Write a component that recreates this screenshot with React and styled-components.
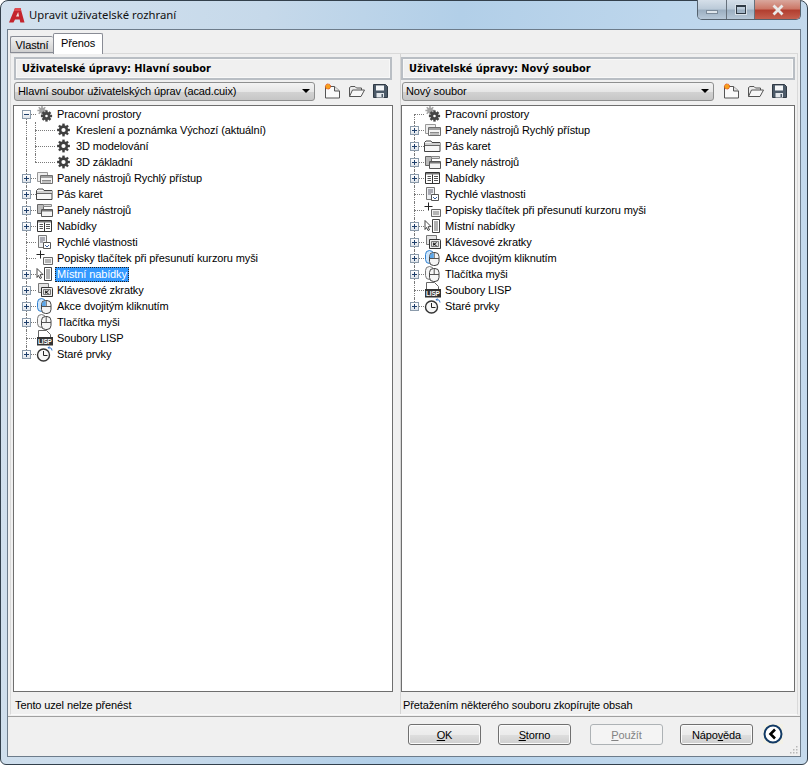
import React from "react";
import styled, { createGlobalStyle } from "styled-components";

const GlobalStyle = createGlobalStyle`
  html, body { margin: 0; padding: 0; background: #fff; }
  #root { width: 808px; height: 765px; }
`;

const Frame = styled.div`
  box-sizing: border-box;
  width: 808px;
  height: 765px;
  display: flex;
  flex-direction: column;
  padding: 0 7px 7px;
  border: 1px solid #33404c;
  border-radius: 8px 8px 6px 6px;
  background: linear-gradient(96deg, #d3e1ee 0%, #c6d9ea 30%, #b2cfe8 52%, #bdd6ec 75%, #c6daec 100%);
  font-family: "Liberation Sans", Arial, sans-serif;
  font-size: 11px;
  letter-spacing: -0.12px;
  color: #000;
`;

const TitleBar = styled.div`
  height: 28px;
  margin: 0 -1px;
  display: flex;
  align-items: flex-start;
  flex-shrink: 0;
`;

const AppLogo = styled.svg`
  width: 16px;
  height: 16px;
  margin: 6px 4px 0 2px;
`;

const Title = styled.div`
  flex: 1;
  padding-top: 6px;
  font-family: "Noto Sans", sans-serif;
  font-size: 11.3px;
  letter-spacing: 0;
  line-height: 16px;
  color: #111;
`;

const WinButtons = styled.div`
  display: flex;
  height: 19px;
  margin-top: -1px;
  border: 1px solid #55626e;
  border-top: none;
  border-radius: 0 0 5px 5px;
  overflow: hidden;
`;

const WinButton = styled.div`
  display: flex;
  align-items: center;
  justify-content: center;
  width: ${({ $w }) => $w}px;
  border-right: 1px solid #66717c;
  background: ${({ $close }) =>
    $close
      ? "linear-gradient(#d9a79d 0%, #cc7868 45%, #b23f30 55%, #c4604f 100%)"
      : "linear-gradient(#d5dfe9 0%, #bccbd9 45%, #9cafc1 55%, #b7c8d8 100%)"};
  &:last-child { border-right: none; }
`;

const MinGlyph = styled.div`
  width: 10px;
  height: 2px;
  margin-top: 5px;
  border: 1px solid #7b8a99;
  background: #dfe6ec;
`;

const MaxGlyph = styled.div`
  width: 8px;
  height: 6px;
  border: 1px solid #2f3a45;
  border-top-width: 2px;
  outline: 1px solid #d8e0e8;
`;

const CloseGlyph = styled.svg`
  width: 14px;
  height: 12px;
`;

const Client = styled.div`
  flex: 1;
  display: flex;
  flex-direction: column;
  min-height: 0;
  margin: 0 -1px;
  border: 1px solid #6d7c8b;
  background: #f0f0f0;
`;

const TabStrip = styled.div`
  height: 20px;
  margin-top: 3px;
  padding-left: 2px;
  display: flex;
  align-items: flex-end;
  flex-shrink: 0;
  position: relative;
  z-index: 1;
`;

const Tab = styled.div`
  box-sizing: border-box;
  display: flex;
  justify-content: center;
  width: ${({ $w }) => $w}px;
  height: ${({ $active }) => ($active ? 21 : 17)}px;
  margin-bottom: ${({ $active }) => ($active ? -1 : 0)}px;
  padding-top: ${({ $active }) => ($active ? 2 : 1)}px;
  line-height: 15px;
  border: 1px solid #898c95;
  border-right: ${({ $active }) => ($active ? "1px solid #898c95" : "none")};
  border-bottom: ${({ $active }) => ($active ? "none" : "1px solid #898c95")};
  border-radius: 2px 2px 0 0;
  background: ${({ $active }) => ($active ? "#fff" : "linear-gradient(#f2f2f2, #cfcfcf)")};
`;

const TabPanel = styled.div`
  height: 660px;
  margin: 0 2px;
  display: flex;
  flex-shrink: 0;
  border: 1px solid #d9d9d9;
  border-bottom: 1px solid #fafafa;
`;

const Pane = styled.div`
  box-sizing: border-box;
  width: ${({ $w }) => $w}px;
  padding: 3px ${({ $r }) => $r}px 0 ${({ $l }) => $l}px;
  display: flex;
  flex-direction: column;
  flex-shrink: 0;
`;

const Splitter = styled.div`
  width: 1px;
  background: #d4d4d4;
  flex-shrink: 0;
`;

const PaneHeader = styled.div`
  box-sizing: border-box;
  height: 23px;
  margin: 0 ${({ $m }) => $m}px;
  padding-left: 6px;
  display: flex;
  align-items: center;
  border: 2px solid #b9bec4;
  box-shadow: inset 0 0 0 1px #f8f8f8;
  font-family: "DejaVu Sans", sans-serif;
  font-size: 9.8px;
  letter-spacing: 0;
  font-weight: bold;
  background: #f0f0f0;
`;

const ComboRow = styled.div`
  margin-top: 1px;
  padding: 0 ${({ $r }) => $r}px 0 1px;
  display: flex;
  align-items: center;
  height: 20px;
`;

const Combo = styled.div`
  box-sizing: border-box;
  flex: 1;
  height: 19px;
  padding: 0 3px;
  display: flex;
  align-items: center;
  justify-content: space-between;
  border: 1px solid #8e8f8f;
  border-radius: 3px;
  background: linear-gradient(#f3f3f3 0%, #e6e6e6 50%, #d2d2d2 55%, #c6c6c6 100%);
`;

const ComboArrow = styled.div`
  width: 0;
  height: 0;
  margin-right: 1px;
  border-left: 4px solid transparent;
  border-right: 4px solid transparent;
  border-top: 4px solid #000;
`;

const ToolIcons = styled.div`
  display: flex;
  gap: 7px;
  margin-left: 9px;
`;

const ToolIcon = styled.svg`
  width: 17px;
  height: 16px;
`;

const Tree = styled.div`
  flex: 1;
  margin-top: 4px;
  padding: 0 0 0 3px;
  border: 1px solid #6e6e6e;
  background: #fff;
`;

const Row = styled.div`
  height: 16px;
  display: flex;
  align-items: center;
`;

const Cell = styled.div`
  position: relative;
  display: flex;
  align-items: center;
  justify-content: flex-start;
  height: 16px;
  width: ${({ $w }) => $w}px;
  flex-shrink: 0;
  &::before {
    content: "";
    position: absolute;
    left: ${({ $at }) => $at}px;
    top: ${({ $line }) => ($line === "bottom" ? "8px" : "0")};
    bottom: ${({ $line }) => ($line === "top" ? "8px" : "0")};
    border-left: 1px dotted #7a7a7a;
  }
  &::after {
    content: "";
    display: ${({ $stub }) => ($stub ? "block" : "none")};
    position: absolute;
    left: ${({ $at }) => $at}px;
    right: 0;
    top: 8px;
    border-top: 1px dotted #7a7a7a;
  }
`;

const Expander = styled.div`
  box-sizing: border-box;
  position: relative;
  z-index: 1;
  width: 9px;
  height: 9px;
  margin-left: 5px;
  border: 1px solid #8b9bab;
  background: linear-gradient(#fff, #dfe4ea);
  &::before {
    content: "";
    position: absolute;
    left: 1px;
    right: 1px;
    top: 3px;
    height: 1px;
    background: #1f3f6b;
  }
  &::after {
    content: "";
    display: ${({ $open }) => ($open ? "none" : "block")};
    position: absolute;
    top: 1px;
    bottom: 1px;
    left: 3px;
    width: 1px;
    background: #1f3f6b;
  }
`;

const NodeIcon = styled.svg`
  width: 17px;
  height: 16px;
  flex-shrink: 0;
`;

const Label = styled.span`
  margin-left: 2px;
  padding: 0 2px;
  height: 15px;
  line-height: 15px;
  white-space: nowrap;
  color: ${({ $sel }) => ($sel ? "#fff" : "#000")};
  background: ${({ $sel }) => ($sel ? "#3399ff" : "transparent")};
  outline: ${({ $sel }) => ($sel ? "1px dotted #222" : "none")};
  outline-offset: -1px;
`;

const Status = styled.div`
  height: 16px;
  margin-top: 5px;
  padding: 1px 0 0 2px;
  line-height: 15px;
  white-space: nowrap;
`;

const Footer = styled.div`
  flex: 1;
  position: relative;
  margin-top: 1px;
  padding: 7px 17px 0 0;
  display: flex;
  justify-content: flex-end;
  gap: 17px;
  border-top: 1px solid #a0a0a0;
`;

const DialogButton = styled.div`
  box-sizing: border-box;
  width: 73px;
  height: 21px;
  margin-right: ${({ $extra }) => $extra || 0}px;
  display: flex;
  align-items: center;
  justify-content: center;
  border: 1px solid ${({ $disabled }) => ($disabled ? "#adb2b5" : "#707070")};
  border-radius: 3px;
  color: ${({ $disabled }) => ($disabled ? "#838383" : "#000")};
  background: ${({ $disabled }) =>
    $disabled ? "#f4f4f4" : "linear-gradient(#f2f2f2 0%, #ebebeb 50%, #dddddd 55%, #cfcfcf 100%)"};
  box-shadow: inset 0 0 0 1px ${({ $disabled }) => ($disabled ? "transparent" : "#fbfbfb")};
  u { text-underline-offset: 1px; }
`;

const BackButton = styled.svg`
  width: 20px;
  height: 20px;
  margin-left: -7px;
  background: #f3f1e6;
`;

const Grip = styled.svg`
  position: absolute;
  right: 1px;
  bottom: 1px;
  width: 11px;
  height: 11px;
`;

// ---- icons ----

const teeth = [0, 45, 90, 135, 180, 225, 270, 315];

const Cog = ({ cx, cy, r, color, w = 2.4 }) => (
  <g>
    {teeth.map((a) => (
      <line
        key={a}
        x1={cx}
        y1={cy - r + 0.5}
        x2={cx}
        y2={cy - r - 2}
        stroke={color}
        strokeWidth={w}
        transform={`rotate(${a} ${cx} ${cy})`}
      />
    ))}
    <circle cx={cx} cy={cy} r={r - 1} fill="#fff" stroke={color} strokeWidth={2.6} />
  </g>
);

const icons = {
  workspaces: (
    <>
      <Cog cx={6} cy={4.5} r={2.6} color="#a2a2a2" w={1.5} />
      <Cog cx={10.5} cy={10} r={3.6} color="#454545" />
    </>
  ),
  gear: <Cog cx={8.5} cy={8} r={4.4} color="#3f3f3f" />,
  toolbars: (
    <>
      <path d="M1.5 2.5h10v9h-10z" fill="#eee" stroke="#999" />
      <path d="M4.5 5.5h12v8h-12z" fill="#f4f4f4" stroke="#6e6e6e" />
      <path d="M5 6h11v2H5z" fill="#a0a0a0" />
      <path d="M6 10.5h9M6 12h9" stroke="#8a8a8a" />
    </>
  ),
  ribbon: (
    <>
      <path d="M0.5 13.5v-9l1.5-1.5h5l1 1.5h8v9z" fill="#f6f6f6" stroke="#444" />
      <path d="M1 5h15v2H1z" fill="#cfcfcf" />
      <path d="M1 7.5h15" stroke="#666" />
    </>
  ),
  panels: (
    <>
      <path d="M1.5 2.5h6v9h-6z" fill="#bbb" stroke="#666" />
      <path d="M7.5 2.5h8v2h-8z" fill="#ddd" stroke="#888" />
      <path d="M5.5 7.5h11v7h-11z" fill="#f4f4f4" stroke="#555" />
      <path d="M6 8h10v1.5H6z" fill="#777" />
    </>
  ),
  menus: (
    <>
      <path d="M1.5 2.5h14v11h-14z" fill="#fff" stroke="#333" />
      <path d="M2 3h13v1.5H2z" fill="#777" />
      <path d="M8.5 4.5v9" stroke="#333" />
      <path d="M3.5 6.5h3.5M3.5 8.5h3.5M3.5 10.5h3.5M10 6.5h4M10 8.5h4M10 10.5h4" stroke="#555" />
    </>
  ),
  quick: (
    <>
      <path d="M2.5 1.5h8v12h-8z" fill="#eef0f2" stroke="#777" />
      <path d="M4 4h5M4 6h5M4 8h3" stroke="#667" />
      <path d="M7.5 8.5h7v6h-7z" fill="#fff" stroke="#555" />
      <path d="M9 11l2 2 2-2" fill="none" stroke="#3a5f9a" />
    </>
  ),
  tooltip: (
    <>
      <path d="M4.5 0.5v8M0.5 4.5h8" stroke="#222" />
      <path d="M7.5 7.5h9v7h-9z" fill="#f2f2f2" stroke="#666" />
      <path d="M9 10h6M9 12h6" stroke="#777" />
    </>
  ),
  context: (
    <>
      <path d="M1 2.5l6 6-3 .3 1.5 3-1.5.7-1.5-3-1.5 2z" fill="#fff" stroke="#333" strokeWidth=".9" />
      <path d="M8.5 1.5h7v13h-7z" fill="#fff" stroke="#444" />
      <path d="M10 4h4M10 6h4M10 8h4M10 10h4M10 12h4" stroke="#666" />
    </>
  ),
  keys: (
    <>
      <path d="M2.5 1.5h10v9h-10z" fill="#e4e4e4" stroke="#777" />
      <path d="M5.5 5.5h10a1 1 0 0 1 1 1v8h-11z" fill="#eee" stroke="#333" />
      <path d="M7.5 7.5h7v5h-7z" fill="#dedede" stroke="#777" />
      <path d="M9.7 8.6v3M12.6 8.6l-2.6 1.6 2.6 1.6" fill="none" stroke="#111" />
    </>
  ),
  dblclick: (
    <>
      <rect x="1.5" y="0.5" width="8" height="13" rx="4" fill="#cfe6fb" stroke="#2f80d0" />
      <rect x="5.5" y="2.5" width="9.5" height="13" rx="4" fill="#f4f4f4" stroke="#444" />
      <path d="M5.5 8.5h9.5M10.2 2.5v6" stroke="#555" />
      <path d="M6 8V6.5a4 3 0 0 1 3.7-3.5V8z" fill="#5aa6ea" />
    </>
  ),
  mouse: (
    <>
      <rect x="1.5" y="0.5" width="8" height="13" rx="4" fill="#f6f6f6" stroke="#777" />
      <rect x="5.5" y="2.5" width="9.5" height="13" rx="4" fill="#f6f6f6" stroke="#444" />
      <path d="M5.5 8.5h9.5M10.2 2.5v6" stroke="#555" />
    </>
  ),
  lisp: (
    <>
      <path d="M2.5 0.5h8l4 4v5h-12z" fill="#fff" stroke="#666" />
      <path d="M1 7h16v8.5H1z" fill="#333" />
      <text x="2" y="14" fill="#fff" fontFamily="Liberation Sans, sans-serif" fontSize="6.4" fontWeight="bold">LISP</text>
    </>
  ),
  legacy: (
    <>
      <circle cx="7.5" cy="9" r="6" fill="#f7f7f7" stroke="#333" strokeWidth="1.4" />
      <path d="M7.5 5V9.5H11.5" fill="none" stroke="#222" />
      <path d="M13.5 1.5a3 3 0 0 1 2.5 3" fill="none" stroke="#2f73c9" />
      <path d="M13.5 0l-2 1.7 2 1.5z" fill="#2f73c9" />
    </>
  ),
};

const Tools = () => (
  <ToolIcons>
    <ToolIcon viewBox="0 0 17 16">
      <path d="M1.5 3.5h9l5 4.5v7h-14z" fill="#fafafa" stroke="#555" />
      <path d="M10.5 3.5v4.5h5" fill="#e0e0e0" stroke="#555" />
      <circle cx="4" cy="3.5" r="2.6" fill="#f6a11d" stroke="#e2441a" strokeDasharray="1 .6" />
    </ToolIcon>
    <ToolIcon viewBox="0 0 17 16">
      <path d="M1.5 13.5v-9l1.5-1h4l1.5 1.5h5v2" fill="#ececec" stroke="#555" />
      <path d="M1.5 13.5l3-6.5h12l-3.5 6.5z" fill="#f8f8f8" stroke="#555" />
    </ToolIcon>
    <ToolIcon viewBox="0 0 17 16">
      <path d="M1.5 1.5h12l2 2v11h-14z" fill="#4c5a68" stroke="#2f3944" />
      <path d="M4 2.5h8v5H4z" fill="#f4f6f8" />
      <path d="M4.5 10h7.5v4.5H4.5z" fill="#e4e8ec" />
      <path d="M9.5 11h1.5v3H9.5z" fill="#4c5a68" />
    </ToolIcon>
  </ToolIcons>
);

const Node = ({ icon, label, kind, sel, first, last, noExpander, child, childLast }) => (
  <Row>
    {child ? (
      <>
        <Cell $w={19} $at={9} $line="full" />
        <Cell $w={19} $at={-1} $line={childLast ? "top" : "full"} $stub />
      </>
    ) : (
      <Cell $w={19} $at={9} $line={first ? "bottom" : last ? "top" : "full"} $stub>
        {noExpander ? null : <Expander $open={kind === "open"} />}
      </Cell>
    )}
    <NodeIcon viewBox="0 0 17 16">{icons[icon]}</NodeIcon>
    <Label $sel={sel}>{label}</Label>
  </Row>
);

const leftNodes = [
  { icon: "workspaces", label: "Pracovní prostory", kind: "open", first: true },
  { icon: "gear", label: "Kreslení a poznámka Výchozí (aktuální)", child: true },
  { icon: "gear", label: "3D modelování", child: true },
  { icon: "gear", label: "3D základní", child: true, childLast: true },
  { icon: "toolbars", label: "Panely nástrojů Rychlý přístup" },
  { icon: "ribbon", label: "Pás karet" },
  { icon: "panels", label: "Panely nástrojů" },
  { icon: "menus", label: "Nabídky" },
  { icon: "quick", label: "Rychlé vlastnosti", noExpander: true },
  { icon: "tooltip", label: "Popisky tlačítek při přesunutí kurzoru myši", noExpander: true },
  { icon: "context", label: "Místní nabídky", sel: true },
  { icon: "keys", label: "Klávesové zkratky" },
  { icon: "dblclick", label: "Akce dvojitým kliknutím" },
  { icon: "mouse", label: "Tlačítka myši" },
  { icon: "lisp", label: "Soubory LISP", noExpander: true },
  { icon: "legacy", label: "Staré prvky", last: true },
];

const rightNodes = [
  { icon: "workspaces", label: "Pracovní prostory", first: true, noExpander: true },
  { icon: "toolbars", label: "Panely nástrojů Rychlý přístup" },
  { icon: "ribbon", label: "Pás karet" },
  { icon: "panels", label: "Panely nástrojů" },
  { icon: "menus", label: "Nabídky" },
  { icon: "quick", label: "Rychlé vlastnosti", noExpander: true },
  { icon: "tooltip", label: "Popisky tlačítek při přesunutí kurzoru myši", noExpander: true },
  { icon: "context", label: "Místní nabídky" },
  { icon: "keys", label: "Klávesové zkratky" },
  { icon: "dblclick", label: "Akce dvojitým kliknutím" },
  { icon: "mouse", label: "Tlačítka myši" },
  { icon: "lisp", label: "Soubory LISP", noExpander: true },
  { icon: "legacy", label: "Staré prvky", last: true },
];

export default function App() {
  return (
    <>
      <GlobalStyle />
      <Frame>
        <TitleBar>
          <AppLogo viewBox="0 0 16 16">
            <path d="M0 15.5L6 1h5.5l4 14.5h-4.2l-.6-3H6l-1.5 3z" fill="#c4252d" />
            <path d="M7 9.5h3l-.8-4.5z" fill="#f3e4e0" />
            <path d="M6 1h5.5l.8 3H5z" fill="#dd4a4f" />
          </AppLogo>
          <Title>Upravit uživatelské rozhraní</Title>
          <WinButtons>
            <WinButton $w={28}><MinGlyph /></WinButton>
            <WinButton $w={27}><MaxGlyph /></WinButton>
            <WinButton $w={45} $close>
              <CloseGlyph viewBox="0 0 14 12">
                <path d="M2.5 1.5l9 9M11.5 1.5l-9 9" stroke="#e9e9e9" strokeWidth="2.8" />
              </CloseGlyph>
            </WinButton>
          </WinButtons>
        </TitleBar>
        <Client>
          <TabStrip>
            <Tab $w={43}>Vlastní</Tab>
            <Tab $w={50} $active>Přenos</Tab>
          </TabStrip>
          <TabPanel>
            <Pane $w={389} $l={2} $r={7}>
              <PaneHeader $m={1}>Uživatelské úpravy: Hlavní soubor</PaneHeader>
              <ComboRow $r={4}>
                <Combo>
                  Hlavní soubor uživatelských úprav (acad.cuix)
                  <ComboArrow />
                </Combo>
                <Tools />
              </ComboRow>
              <Tree>
                {leftNodes.map((n) => <Node key={n.label} {...n} />)}
              </Tree>
              <Status>Tento uzel nelze přenést</Status>
            </Pane>
            <Splitter />
            <Pane $w={396} $l={0} $r={2}>
              <PaneHeader $m={0}>Uživatelské úpravy: Nový soubor</PaneHeader>
              <ComboRow $r={7}>
                <Combo>
                  Nový soubor
                  <ComboArrow />
                </Combo>
                <Tools />
              </ComboRow>
              <Tree>
                {rightNodes.map((n) => <Node key={n.label} {...n} />)}
              </Tree>
              <Status>Přetažením některého souboru zkopírujte obsah</Status>
            </Pane>
          </TabPanel>
          <Footer>
            <DialogButton><span><u>O</u>K</span></DialogButton>
            <DialogButton $extra={2}><span><u>S</u>torno</span></DialogButton>
            <DialogButton $disabled><span><u>P</u>oužít</span></DialogButton>
            <DialogButton><span>Nápo<u>v</u>ěda</span></DialogButton>
            <BackButton viewBox="0 0 20 20">
              <circle cx="10" cy="10" r="8.5" fill="#fff" stroke="#123a66" strokeWidth="2" />
              <path d="M12 5.5L7.5 10l4.5 4.5" fill="none" stroke="#000" strokeWidth="2.6" />
            </BackButton>
            <Grip viewBox="0 0 11 11">
              <path d="M8 2h1.5v1.5H8zM5 5h1.5v1.5H5zM8 5h1.5v1.5H8zM2 8h1.5v1.5H2zM5 8h1.5v1.5H5zM8 8h1.5v1.5H8z" fill="#b8b8b8" />
            </Grip>
          </Footer>
        </Client>
      </Frame>
    </>
  );
}
